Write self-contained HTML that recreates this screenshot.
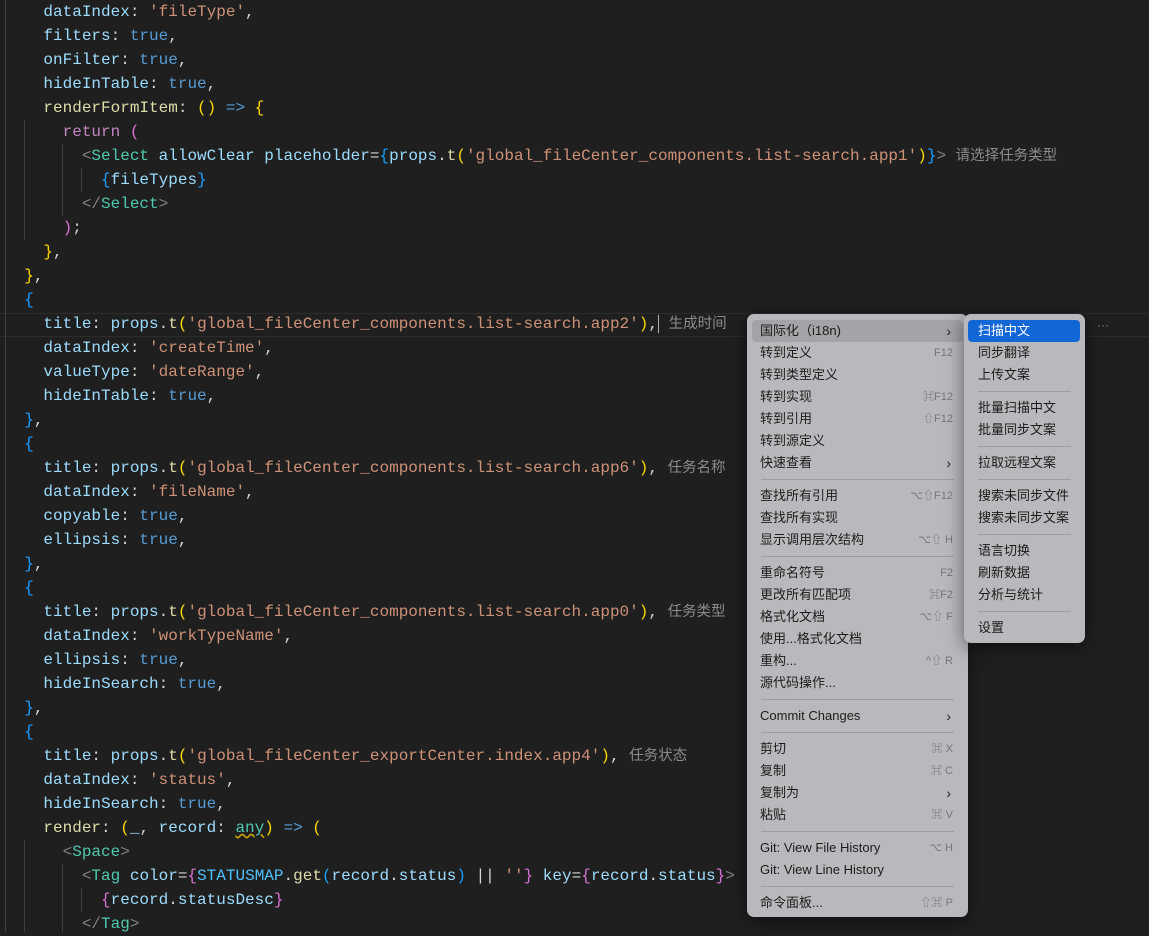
<!DOCTYPE html>
<html><head><meta charset="utf-8"><style>
body{margin:0;width:1149px;height:932px;background:#1f1f1f;overflow:hidden;position:relative;font-family:"Liberation Mono","Noto Sans CJK SC",monospace}
.code{position:absolute;left:5px;top:0;font-size:16px;line-height:24px;color:#d4d4d4;white-space:pre}
.p{color:#9cdcfe}.s{color:#ce9178}.k{color:#569cd6}.f{color:#dcdcaa}.y{color:#ffd700}.m{color:#da70d6}.b{color:#179fff}.t{color:#4ec9b0}.g{color:#808080}.r{color:#c586c0}.h{color:#8b8b8b;font-family:"Liberation Sans","Noto Sans CJK SC",sans-serif;font-size:14.5px}.c{color:#4fc1ff}
.guide{position:absolute;width:1px;background:#404040}
.cur{position:absolute;left:0;right:0;top:313px;height:22px;border-top:1px solid #2c2c2c;border-bottom:1px solid #2c2c2c}
.menu{position:absolute;background:#b9b8bd;border-radius:7px;box-shadow:0 4px 18px rgba(0,0,0,.5);font-family:"Liberation Sans","Noto Sans CJK SC",sans-serif;font-size:13px;color:#1c1c1c;padding:6px 0 4px;box-sizing:border-box}
.it{height:22px;line-height:22px;padding-left:8px;position:relative;margin:0 5px;border-radius:4px}
.it .sc{position:absolute;right:10px;top:0;color:#75757a;font-size:11px}
.it .ar{position:absolute;right:12px;top:0;font-size:14px;color:#222}
.sep{height:1px;background:#9d9ca1;margin:5px 14px}
.hl{background:#a4a3a8}
.sel{background:#1366d6;color:#fff}
.sub .it{padding-left:10px;margin:0 5px 0 4px}
</style></head><body>
<div class="cur"></div>
<div class="guide" style="left:5px;top:0;height:932px"></div>
<div class="guide" style="left:24px;top:120px;height:120px"></div>
<div class="guide" style="left:62px;top:144px;height:72px"></div>
<div class="guide" style="left:81px;top:168px;height:24px"></div>
<div class="guide" style="left:24px;top:840px;height:92px"></div>
<div class="guide" style="left:62px;top:864px;height:68px"></div>
<div class="guide" style="left:81px;top:888px;height:24px"></div>
<div class="code"><span class="p">    dataIndex</span>: <span class="s">'fileType'</span>,
<span class="p">    filters</span>: <span class="k">true</span>,
<span class="p">    onFilter</span>: <span class="k">true</span>,
<span class="p">    hideInTable</span>: <span class="k">true</span>,
    <span class="f">renderFormItem</span>: <span class="y">()</span> <span class="k">=&gt;</span> <span class="y">{</span>
      <span class="r">return</span> <span class="m">(</span>
        <span class="g">&lt;</span><span class="t">Select</span> <span class="p">allowClear</span> <span class="p">placeholder</span>=<span class="b">{</span><span class="p">props</span>.<span class="f">t</span><span class="y">(</span><span class="s">'global_fileCenter_components.list-search.app1'</span><span class="y">)</span><span class="b">}</span><span class="g">&gt;</span> <span class="h">请选择任务类型</span>
          <span class="b">{</span><span class="p">fileTypes</span><span class="b">}</span>
        <span class="g">&lt;/</span><span class="t">Select</span><span class="g">&gt;</span>
      <span class="m">)</span>;
    <span class="y">}</span>,
  <span class="y">}</span>,
  <span class="b">{</span>
<span class="p">    title</span>: <span class="p">props</span>.<span class="f">t</span><span class="y">(</span><span class="s">'global_fileCenter_components.list-search.app2'</span><span class="y">)</span>,<span style="border-left:1px solid #aeafad"> </span><span class="h">生成时间</span>
<span class="p">    dataIndex</span>: <span class="s">'createTime'</span>,
<span class="p">    valueType</span>: <span class="s">'dateRange'</span>,
<span class="p">    hideInTable</span>: <span class="k">true</span>,
  <span class="b">}</span>,
  <span class="b">{</span>
<span class="p">    title</span>: <span class="p">props</span>.<span class="f">t</span><span class="y">(</span><span class="s">'global_fileCenter_components.list-search.app6'</span><span class="y">)</span>, <span class="h">任务名称</span>
<span class="p">    dataIndex</span>: <span class="s">'fileName'</span>,
<span class="p">    copyable</span>: <span class="k">true</span>,
<span class="p">    ellipsis</span>: <span class="k">true</span>,
  <span class="b">}</span>,
  <span class="b">{</span>
<span class="p">    title</span>: <span class="p">props</span>.<span class="f">t</span><span class="y">(</span><span class="s">'global_fileCenter_components.list-search.app0'</span><span class="y">)</span>, <span class="h">任务类型</span>
<span class="p">    dataIndex</span>: <span class="s">'workTypeName'</span>,
<span class="p">    ellipsis</span>: <span class="k">true</span>,
<span class="p">    hideInSearch</span>: <span class="k">true</span>,
  <span class="b">}</span>,
  <span class="b">{</span>
<span class="p">    title</span>: <span class="p">props</span>.<span class="f">t</span><span class="y">(</span><span class="s">'global_fileCenter_exportCenter.index.app4'</span><span class="y">)</span>, <span class="h">任务状态</span>
<span class="p">    dataIndex</span>: <span class="s">'status'</span>,
<span class="p">    hideInSearch</span>: <span class="k">true</span>,
    <span class="f">render</span>: <span class="y">(</span><span class="p">_</span>, <span class="p">record</span>: <span class="t" style="text-decoration:underline wavy #cca700">any</span><span class="y">)</span> <span class="k">=&gt;</span> <span class="y">(</span>
      <span class="g">&lt;</span><span class="t">Space</span><span class="g">&gt;</span>
        <span class="g">&lt;</span><span class="t">Tag</span> <span class="p">color</span>=<span class="m">{</span><span class="c">STATUSMAP</span>.<span class="f">get</span><span class="b">(</span><span class="p">record</span>.<span class="p">status</span><span class="b">)</span> || <span class="s">''</span><span class="m">}</span> <span class="p">key</span>=<span class="m">{</span><span class="p">record</span>.<span class="p">status</span><span class="m">}</span><span class="g">&gt;</span>
          <span class="m">{</span><span class="p">record</span>.<span class="p">statusDesc</span><span class="m">}</span>
        <span class="g">&lt;/</span><span class="t">Tag</span><span class="g">&gt;</span></div>
<div style="position:absolute;left:1097px;top:318px;color:#888;font-size:12px;font-family:'Liberation Sans',sans-serif">···</div>

<div class="menu" style="left:747px;top:314px;width:221px;height:603px">
<div class="it hl">国际化（i18n)<span class="ar">›</span></div>
<div class="it">转到定义<span class="sc">F12</span></div>
<div class="it">转到类型定义</div>
<div class="it">转到实现<span class="sc">⌘F12</span></div>
<div class="it">转到引用<span class="sc">⇧F12</span></div>
<div class="it">转到源定义</div>
<div class="it">快速查看<span class="ar">›</span></div>
<div class="sep"></div>
<div class="it">查找所有引用<span class="sc">⌥⇧F12</span></div>
<div class="it">查找所有实现</div>
<div class="it">显示调用层次结构<span class="sc">⌥⇧ H</span></div>
<div class="sep"></div>
<div class="it">重命名符号<span class="sc">F2</span></div>
<div class="it">更改所有匹配项<span class="sc">⌘F2</span></div>
<div class="it">格式化文档<span class="sc">⌥⇧ F</span></div>
<div class="it">使用...格式化文档</div>
<div class="it">重构...<span class="sc">^⇧ R</span></div>
<div class="it">源代码操作...</div>
<div class="sep"></div>
<div class="it">Commit Changes<span class="ar">›</span></div>
<div class="sep"></div>
<div class="it">剪切<span class="sc">⌘ X</span></div>
<div class="it">复制<span class="sc">⌘ C</span></div>
<div class="it">复制为<span class="ar">›</span></div>
<div class="it">粘贴<span class="sc">⌘ V</span></div>
<div class="sep"></div>
<div class="it">Git: View File History<span class="sc">⌥ H</span></div>
<div class="it">Git: View Line History</div>
<div class="sep"></div>
<div class="it">命令面板...<span class="sc">⇧⌘ P</span></div>
</div>

<div class="menu sub" style="left:964px;top:314px;width:121px;height:329px">
<div class="it sel">扫描中文</div>
<div class="it">同步翻译</div>
<div class="it">上传文案</div>
<div class="sep"></div>
<div class="it">批量扫描中文</div>
<div class="it">批量同步文案</div>
<div class="sep"></div>
<div class="it">拉取远程文案</div>
<div class="sep"></div>
<div class="it">搜索未同步文件</div>
<div class="it">搜索未同步文案</div>
<div class="sep"></div>
<div class="it">语言切换</div>
<div class="it">刷新数据</div>
<div class="it">分析与统计</div>
<div class="sep"></div>
<div class="it">设置</div>
</div>
</body></html>
